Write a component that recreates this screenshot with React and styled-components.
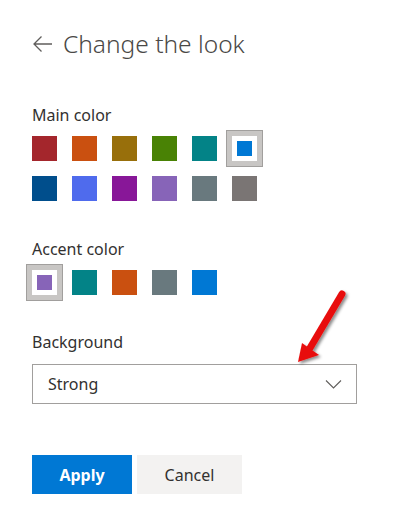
import styled, { createGlobalStyle } from "styled-components"

const GlobalStyle = createGlobalStyle`
    body {
        margin: 0;
        background: #ffffff;
        font-family: "Segoe UI", "Noto Sans", sans-serif;
        color: #323130;
    }
`

const Page = styled.div`
    position: relative;
    width: 394px;
    height: 515px;
    padding: 28px 0 0 32px;
    box-sizing: border-box;
    display: flex;
    flex-direction: column;
    align-items: flex-start;
`

const Header = styled.div`
    display: flex;
    align-items: center;
    gap: 10px;
    height: 32px;
`

const Title = styled.h1`
    margin: 0;
    font-size: 24.5px;
    line-height: 32px;
    font-weight: 300;
    color: #4a4846;
`

const Label = styled.div`
    font-size: 16px;
    line-height: 22px;
    color: #323130;
    margin-top: ${(p) => p.$top}px;
`

const SwatchGrid = styled.div`
    display: grid;
    grid-template-columns: repeat(6, 25px);
    gap: 15px;
    margin-top: 10px;
`

const Swatch = styled.div`
    width: 25px;
    height: 25px;
    background: ${(p) => p.$color};
    box-shadow: ${(p) =>
        p.$selected ? "inset 0 0 0 5px #fff, 0 0 0 5px #c8c6c4, 0 0 0 6px #a19f9d" : "none"};
`

const Dropdown = styled.div`
    margin-top: 11px;
    width: 325px;
    height: 40px;
    box-sizing: border-box;
    border: 1px solid #a19f9d;
    display: flex;
    align-items: center;
    justify-content: space-between;
    padding: 0 14px 0 15px;
    font-size: 16px;
    color: #323130;
`

const Buttons = styled.div`
    display: flex;
    gap: 5px;
    margin-top: 51px;
`

const Button = styled.button`
    height: 39px;
    width: ${(p) => p.$width}px;
    border: none;
    font-family: inherit;
    font-size: 16px;
    font-weight: ${(p) => (p.$primary ? 700 : 400)};
    background: ${(p) => (p.$primary ? "#0078d4" : "#f3f2f1")};
    color: ${(p) => (p.$primary ? "#ffffff" : "#323130")};
    padding: 0;
`

const Pointer = styled.svg`
    position: absolute;
    left: 290px;
    top: 284px;
`

const mainColors = [
    "#a4262c", "#ca5010", "#986f0b", "#498205", "#038387", "#0078d4",
    "#004e8c", "#4f6bed", "#881798", "#8764b8", "#69797e", "#7a7574",
]

const accentColors = ["#8764b8", "#038387", "#ca5010", "#69797e", "#0078d4"]

const App = () => {
    return (
        <Page>
            <GlobalStyle />
            <Header>
                <svg width="21" height="18" viewBox="0 0 21 18">
                    <path d="M20 9H2M9.5 1.5 2 9l7.5 7.5" fill="none" stroke="#605e5c" strokeWidth="1.3" />
                </svg>
                <Title>Change the look</Title>
            </Header>

            <Label $top={44}>Main color</Label>
            <SwatchGrid>
                {mainColors.map((c, i) => (
                    <Swatch key={i} $color={c} $selected={i === 5} />
                ))}
            </SwatchGrid>

            <Label $top={37}>Accent color</Label>
            <SwatchGrid>
                {accentColors.map((c, i) => (
                    <Swatch key={i} $color={c} $selected={i === 0} />
                ))}
            </SwatchGrid>

            <Label $top={36}>Background</Label>
            <Dropdown>
                Strong
                <svg width="17" height="10" viewBox="0 0 17 10">
                    <path d="M1 1.5l7.5 7.5L16 1.5" fill="none" stroke="#605e5c" strokeWidth="1.1" />
                </svg>
            </Dropdown>

            <Buttons>
                <Button $primary $width={100}>Apply</Button>
                <Button $width={105}>Cancel</Button>
            </Buttons>

            <Pointer width="70" height="90" viewBox="0 0 70 90">
                <defs>
                    <filter id="sh" x="-30%" y="-30%" width="160%" height="160%">
                        <feDropShadow dx="2" dy="2" stdDeviation="1.5" floodColor="#000" floodOpacity="0.45" />
                    </filter>
                </defs>
                <g filter="url(#sh)">
                    <path d="M52 10 L20 64" stroke="#e8110f" strokeWidth="7" strokeLinecap="round" />
                    <path d="M8 78 L12 59 L29 71 Z" fill="#e8110f" />
                </g>
            </Pointer>
        </Page>
    )
}

export default App
